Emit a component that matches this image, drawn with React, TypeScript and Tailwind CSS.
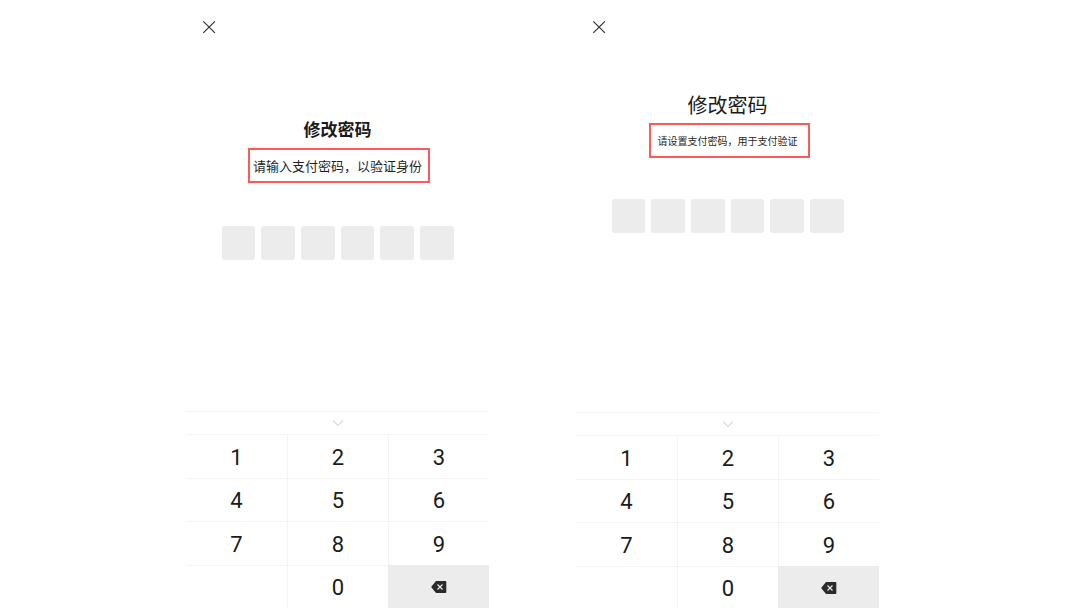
import { useState } from "react";

type PasswordScreenProps = {
  id: string;
  variant: "verify" | "create";
  title: string;
  hint: string;
};

const DIGITS = ["1", "2", "3", "4", "5", "6", "7", "8", "9"];
const PIN_LENGTH = 6;

const styles = {
  verify: {
    body: "pt-[63px] pb-[151px]",
    title: "text-[17px] font-bold",
    hint: "mt-[15px] mb-[50px] text-[13px]",
    frame: "-left-[5px] -right-[8px]",
  },
  create: {
    body: "pt-[39px] pb-[179px]",
    title: "text-[20px] font-normal",
    hint: "mt-[14px] mb-[48px] text-[10px]",
    frame: "-left-[9px] -right-[12px]",
  },
};

function CloseIcon() {
  return (
    <svg width="14" height="14" viewBox="0 0 14 14" fill="none" stroke="#333333" strokeWidth="1.2">
      <path d="M1.300 1.300l11.600 11.600M12.900 1.300L1.300 12.900" />
    </svg>
  );
}

function BackspaceIcon() {
  return (
    <svg width="16" height="14" viewBox="0 0 16 14" fill="none">
      <path d="M5.4 1h9.1c.5 0 .8.3.8.8v10.4c0 .5-.3.8-.8.8H5.4c-.3 0-.6-.1-.8-.4L.5 7.5a.8.8 0 010-1L4.600 1.400c.2-.3.5-.4.8-.4z" fill="#2b2b2b" />
      <path d="M6.500 4.500l5 5M11.500 4.500l-5 5" stroke="#f0f0f0" strokeWidth="1.100" />
    </svg>
  );
}

function Keypad({ onDigit, onDelete }: { onDigit: (d: string) => void; onDelete: () => void }) {
  const keyClass = "flex items-center justify-center border-t border-[#f4f4f4] pt-[3px]";

  return (
    <div className="font-[Roboto,sans-serif] text-[22px] leading-6 text-[#1a1a1a]">
      <button
        type="button"
        aria-label="收起键盘"
        className="flex h-[23px] w-full items-center justify-center border-t border-[#f4f4f4]"
      >
        <svg width="12" height="8" viewBox="0 0 12 8" fill="none" stroke="#dcdcdc" strokeWidth="1.2">
          <path d="M1 1.500l5 5 5-5" />
        </svg>
      </button>
      <div className="grid h-[174px] grid-cols-3 grid-rows-4">
        {DIGITS.map((digit, i) => (
          <button
            key={digit}
            type="button"
            onClick={() => onDigit(digit)}
            className={i % 3 === 0 ? keyClass : `${keyClass} border-l`}
          >
            {digit}
          </button>
        ))}
        <div className={keyClass} />
        <button type="button" onClick={() => onDigit("0")} className={`${keyClass} border-l`}>
          0
        </button>
        <button
          type="button"
          aria-label="删除"
          onClick={onDelete}
          className="flex items-center justify-center bg-[#ececec] pt-[2px]"
        >
          <BackspaceIcon />
        </button>
      </div>
    </div>
  );
}

function PasswordScreen({ id, variant, title, hint }: PasswordScreenProps) {
  const [pin, setPin] = useState("");
  const s = styles[variant];

  return (
    <section className="w-full max-w-[303px]" aria-labelledby={`${id}-title`}>
      <header className="flex h-[54px] items-center px-4">
        <button type="button" aria-label="关闭">
          <CloseIcon />
        </button>
      </header>

      <div className={`flex flex-col items-center ${s.body}`}>
        <h1 id={`${id}-title`} className={`leading-6 text-[#1a1a1a] ${s.title}`}>
          {title}
        </h1>
        <p className={`relative leading-5 whitespace-nowrap text-[#1f1f1f] ${s.hint}`}>
          {hint}
          <span className={`absolute -top-[8px] -bottom-[7px] border-2 border-[#fa5a5a] ${s.frame}`} />
        </p>
        <div className="grid w-[232px] grid-cols-6 gap-[6px]">
          {Array.from({ length: PIN_LENGTH }, (_, i) => (
            <input
              key={i}
              type="password"
              readOnly
              value={pin[i] ?? ""}
              aria-label={`密码第${i + 1}位`}
              className="h-[34px] w-full rounded-[3px] bg-[#ececec] text-center outline-none"
            />
          ))}
        </div>
      </div>

      <Keypad
        onDigit={(d) => setPin((p) => (p + d).slice(0, PIN_LENGTH))}
        onDelete={() => setPin((p) => p.slice(0, -1))}
      />
    </section>
  );
}

export default function App() {
  return (
    <main className="flex h-screen items-start justify-center gap-[87px] overflow-hidden bg-white pr-[15px] font-['Noto_Sans_CJK_SC',sans-serif]">
      <PasswordScreen
        id="verify"
        variant="verify"
        title="修改密码"
        hint="请输入支付密码，以验证身份"
      />
      <PasswordScreen
        id="create"
        variant="create"
        title="修改密码"
        hint="请设置支付密码，用于支付验证"
      />
    </main>
  );
}
